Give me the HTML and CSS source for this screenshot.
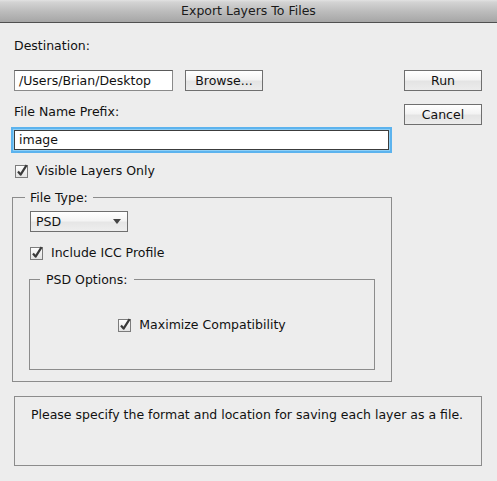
FILE: index.html
```html
<!DOCTYPE html>
<html>
<head>
<meta charset="utf-8">
<link rel="stylesheet" href="styles.css">
</head>
<body>
<div class="titlebar">Export Layers To Files</div>
<div class="content">
  <div class="top">
    <div class="main">
      <div class="label">Destination:</div>
      <div class="dest-row">
        <div class="field dest">/Users/Brian/Desktop</div>
        <div class="btn">Browse...</div>
      </div>
      <div class="label prefix-label">File Name Prefix:</div>
      <div class="field focused">image</div>
      <div class="check visible">
        <svg class="box" width="14" height="14" viewBox="0 0 14 14"><defs><linearGradient id="cbg" x1="0" y1="0" x2="0" y2="1"><stop offset="0" stop-color="#ffffff"/><stop offset="1" stop-color="#e2e2e2"/></linearGradient></defs><rect x="0.5" y="1.5" width="12" height="12" fill="url(#cbg)" stroke="#7c7c7c"/><path d="M3 7.5 L5.6 10.6 L11.6 1.2" fill="none" stroke="#3a3a3a" stroke-width="2.2" stroke-linejoin="round"/></svg>
        <span>Visible Layers Only</span>
      </div>
      <fieldset class="group filetype">
        <legend>File Type:</legend>
        <div class="select"><span>PSD</span><svg width="8" height="5" viewBox="0 0 8 5"><path d="M0 0 H8 L4 5 Z" fill="#444"/></svg></div>
        <div class="check icc">
          <svg class="box" width="14" height="14" viewBox="0 0 14 14"><rect x="0.5" y="1.5" width="12" height="12" fill="url(#cbg)" stroke="#7c7c7c"/><path d="M3 7.5 L5.6 10.6 L11.6 1.2" fill="none" stroke="#3a3a3a" stroke-width="2.2" stroke-linejoin="round"/></svg>
          <span>Include ICC Profile</span>
        </div>
        <fieldset class="group psd">
          <legend>PSD Options:</legend>
          <div class="check max">
            <svg class="box" width="14" height="14" viewBox="0 0 14 14"><rect x="0.5" y="1.5" width="12" height="12" fill="url(#cbg)" stroke="#7c7c7c"/><path d="M3 7.5 L5.6 10.6 L11.6 1.2" fill="none" stroke="#3a3a3a" stroke-width="2.2" stroke-linejoin="round"/></svg>
            <span>Maximize Compatibility</span>
          </div>
        </fieldset>
      </fieldset>
    </div>
    <div class="side">
      <div class="btn">Run</div>
      <div class="btn">Cancel</div>
    </div>
  </div>
  <div class="message">Please specify the format and location for saving each layer as a file.</div>
</div>
</body>
</html>
```
FILE: styles.css
```css
html, body {
  margin: 0;
  padding: 0;
  background: #ededed;
  font-family: "DejaVu Sans", "Liberation Sans", sans-serif;
  font-size: 12.5px;
  line-height: 15px;
  color: #111;
}

.titlebar {
  height: 22px;
  line-height: 22px;
  text-align: center;
  font-size: 12.5px;
  color: #1a1a1a;
  background: linear-gradient(#e2e2e2 0, #d4d4d4 2px, #bdbdbd 50%, #a6a6a6 100%);
  border-bottom: 1px solid #505050;
}

.content {
  padding: 0 15px 0 14px;
}

.top {
  display: flex;
  align-items: flex-start;
  gap: 15px;
}

.main {
  width: 375px;
  padding-top: 15px;
}

.side {
  margin-top: 47px;
  display: flex;
  flex-direction: column;
  gap: 13px;
}

.label {
  height: 15px;
}

.dest-row {
  margin-top: 17px;
  display: flex;
  gap: 12px;
}

.field {
  box-sizing: border-box;
  height: 21px;
  line-height: 19px;
  padding-left: 4px;
  background: #ffffff;
  border: 1px solid #8a8a8a;
  border-top-color: #5a5a5a;
  color: #111;
}

.dest {
  width: 159px;
}

.btn {
  box-sizing: border-box;
  width: 78px;
  height: 21px;
  line-height: 19px;
  text-align: center;
  border: 1px solid #6f6f6f;
  background: linear-gradient(#ffffff, #f3f3f3 45%, #e4e4e4 55%, #ececec);
  color: #111;
}

.prefix-label {
  margin-top: 13px;
}

.focused {
  margin-top: 11px;
  height: 20px;
  line-height: 18px;
  border: 1px solid #3c3c3c;
  box-shadow: 0 0 0 1px #8ecff6, 0 0 0 3px #5cb3ee;
}

.check {
  display: flex;
  align-items: center;
  height: 15px;
}

.check .box {
  margin-right: 7px;
  flex: none;
}

.visible {
  margin-top: 13px;
  margin-left: 1px;
}

.group {
  margin: 0;
  border: 1px solid #8c8c8c;
  min-width: 0;
}

.group legend {
  padding: 0 5px;
  margin-left: -5px;
  line-height: 15px;
}

.filetype {
  width: 380px;
  box-sizing: border-box;
  margin: 12px 0 0 -2px;
  padding: 6px 16px 11px 17px;
}

.select {
  box-sizing: border-box;
  width: 98px;
  height: 21px;
  display: flex;
  align-items: center;
  justify-content: space-between;
  padding: 0 6px 0 5px;
  border: 1px solid #6f6f6f;
  background: linear-gradient(#ffffff, #f4f4f4 45%, #e6e6e6 55%, #eeeeee);
}

.icc {
  margin-top: 13px;
}

.psd {
  margin: 12px 0 0 -1px;
  padding: 30px 16px 37px 16px;
}

.psd legend {
  padding: 0 6px;
  margin-left: -6px;
}

.max {
  justify-content: center;
}

.message {
  box-sizing: border-box;
  margin-top: 14px;
  width: 468px;
  height: 70px;
  padding: 10px 0 0 16px;
  border: 1px solid #8c8c8c;
}
```
